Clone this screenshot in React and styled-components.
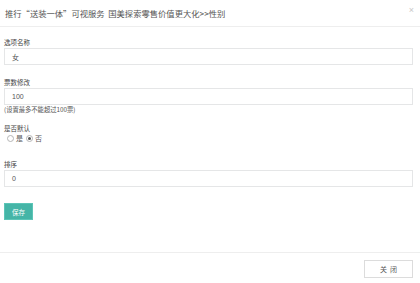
import React from "react";
import styled, { createGlobalStyle } from "styled-components";

const Global = createGlobalStyle`
  html, body {
    margin: 0;
    padding: 0;
    background: #fff;
  }
  body {
    font-family: "Noto Sans CJK SC", "Liberation Sans", sans-serif;
    color: #676a6c;
  }
`;

const Modal = styled.div`
  width: 420px;
  height: 283px;
  display: flex;
  flex-direction: column;
  background: #fff;
`;

const Header = styled.div`
  height: 26px;
  display: flex;
  align-items: center;
  justify-content: space-between;
  padding: 0 6px 0 5px;
  border-bottom: 1px solid #eeeeee;
`;

const Title = styled.h4`
  margin: 0;
  font-size: 8.3px;
  font-weight: normal;
  color: #555;
  white-space: nowrap;
`;

const CloseX = styled.span`
  font-family: "Liberation Sans", sans-serif;
  font-size: 9px;
  color: #c8c8c8;
  line-height: 1;
  margin-top: -6px;
`;

const Body = styled.div`
  flex: 1;
  padding: 11px 7px 0 4px;
  display: flex;
  flex-direction: column;
`;

const Group = styled.div`
  display: flex;
  flex-direction: column;
  margin-bottom: ${(p) => p.$gap || 13}px;
`;

const Label = styled.label`
  font-size: 6.5px;
  line-height: 8px;
  color: #444;
  margin-bottom: 2px;
`;

const Input = styled.div`
  height: 15px;
  border: 1px solid #e5e6e7;
  display: flex;
  align-items: center;
  padding-left: 7px;
  font-size: 7px;
  color: #555;
  font-family: "Liberation Sans", "Noto Sans CJK SC", sans-serif;
`;

const Hint = styled.span`
  font-size: 6.3px;
  line-height: 8px;
  color: #555;
  margin-top: 1px;
`;

const Radios = styled.div`
  display: flex;
  align-items: center;
  padding-left: 3px;
  font-size: 7px;
  line-height: 9px;
  height: 9px;
  color: #555;
`;

const Radio = styled.span`
  width: 5px;
  height: 5px;
  border-radius: 50%;
  border: 1px solid #b5b5b5;
  background: #fff;
  display: inline-flex;
  align-items: center;
  justify-content: center;
  margin-right: 2px;
  margin-left: ${(p) => (p.$first ? 0 : 3)}px;

  &::after {
    content: "";
    width: 3px;
    height: 3px;
    border-radius: 50%;
    background: ${(p) => (p.$checked ? "#555" : "transparent")};
  }
`;

const SaveButton = styled.button`
  align-self: flex-start;
  margin-top: 1px;
  width: 29px;
  height: 17px;
  border: 1px solid #5cc5b7;
  background: #45b5a7;
  color: #fff;
  font-size: 6.5px;
  font-family: inherit;
  padding: 0;
  cursor: pointer;
`;

const Footer = styled.div`
  border-top: 1px solid #eeeeee;
  height: 31px;
  display: flex;
  justify-content: flex-end;
  align-items: flex-start;
  padding: 7px 7px 0 0;
  box-sizing: border-box;
`;

const CloseButton = styled.button`
  width: 49px;
  height: 18px;
  background: #fff;
  border: 1px solid #dcdcdc;
  color: #555;
  font-size: 7px;
  font-family: inherit;
  letter-spacing: 3px;
  padding: 0 0 0 3px;
  cursor: pointer;
`;

export default function App() {
  return (
    <Modal>
      <Global />
      <Header>
        <Title>推行“送装一体”可视服务&nbsp;&nbsp;国美探索零售价值更大化&gt;&gt;性别</Title>
        <CloseX>×</CloseX>
      </Header>
      <Body>
        <Group>
          <Label>选项名称</Label>
          <Input>女</Input>
        </Group>
        <Group $gap={10}>
          <Label>票数修改</Label>
          <Input>100</Input>
          <Hint>(设置最多不能超过100票)</Hint>
        </Group>
        <Group $gap={17}>
          <Label>是否默认</Label>
          <Radios>
            <Radio $first />是
            <Radio $checked />否
          </Radios>
        </Group>
        <Group $gap={15}>
          <Label>排序</Label>
          <Input>0</Input>
        </Group>
        <SaveButton>保存</SaveButton>
      </Body>
      <Footer>
        <CloseButton>关闭</CloseButton>
      </Footer>
    </Modal>
  );
}
